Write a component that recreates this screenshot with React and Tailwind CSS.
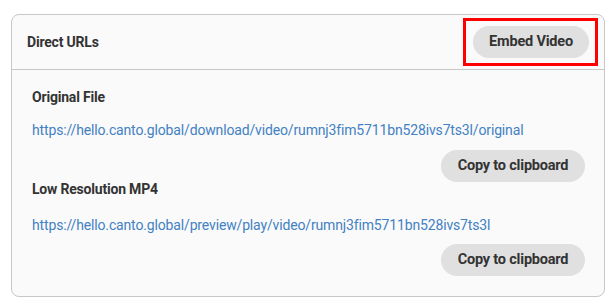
import React from 'react';

const urls = [
  {
    label: 'Original File',
    href: 'https://hello.canto.global/download/video/rumnj3fim5711bn528ivs7ts3l/original',
  },
  {
    label: 'Low Resolution MP4',
    href: 'https://hello.canto.global/preview/play/video/rumnj3fim5711bn528ivs7ts3l',
  },
];

const CopyButton = ({ className }) => (
  <div className={`flex justify-end ${className}`}>
    <button className="h-[32px] w-[144px] rounded-full bg-[#e0e0e0] text-[14.5px] font-bold text-[#333] tracking-[-0.2px]">
      Copy to clipboard
    </button>
  </div>
);

const App = () => {
  return (
    <div
      className="min-h-[307px] w-[615px] bg-white pl-[11px] pt-[14px]"
      style={{ fontFamily: 'Roboto, "Noto Sans", sans-serif' }}
    >
      <div className="w-[594px] h-[283px] rounded-lg border border-[#c8c8c8] bg-[#fafafa] flex flex-col">
        <div className="h-[55px] border-b border-[#c8c8c8] flex items-center justify-between pl-[15px] pr-[15px]">
          <h2 className="text-[14px] font-bold tracking-[-0.2px] text-[#333]">Direct URLs</h2>
          <div className="relative">
            <button className="h-[32px] w-[116px] rounded-full bg-[#e0e0e0] text-[14.5px] font-bold text-[#333] tracking-[-0.2px]">
              Embed Video
            </button>
            <span className="absolute -left-[10px] -right-[9px] -top-[8px] -bottom-[8px] border-[3px] border-[#ff0000] pointer-events-none" />
          </div>
        </div>
        <div className="flex flex-col pl-[20px] pr-[19px]">
          <h3 className="mt-[17px] leading-5 text-[14px] font-bold tracking-[-0.2px] text-[#333]">{urls[0].label}</h3>
          <a className="mt-[13px] leading-5 text-[14px] tracking-[-0.15px] text-[#4281c4]">{urls[0].href}</a>
          <CopyButton className="mt-[10px]" />
          <h3 className="-mt-[1px] leading-4 text-[14px] font-bold tracking-[-0.2px] text-[#333]">{urls[1].label}</h3>
          <a className="mt-[18px] leading-5 text-[14px] tracking-[-0.15px] text-[#4281c4]">{urls[1].href}</a>
          <CopyButton className="mt-[9px]" />
        </div>
      </div>
    </div>
  );
};

export default App;
